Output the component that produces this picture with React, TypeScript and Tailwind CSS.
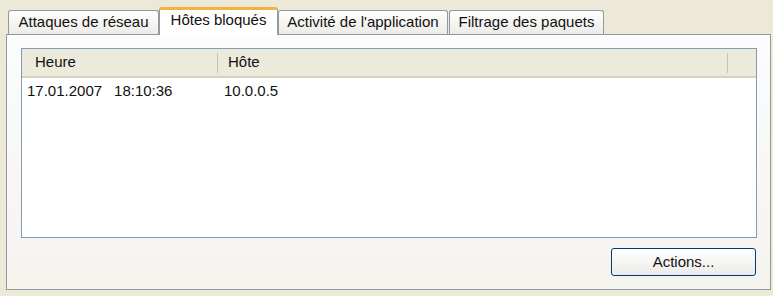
const font = { fontFamily: '"Liberation Sans", Tahoma, sans-serif' }

const tabs = [
  { label: 'Attaques de réseau', w: 'w-[151px]' },
  { label: 'Hôtes bloqués', w: 'w-[119px]', active: true },
  { label: "Activité de l'application", w: 'w-[170px]' },
  { label: 'Filtrage des paquets', w: 'w-[155px]' },
]

export default function App() {
  return (
    <div className="w-[773px] h-[296px] bg-[#ece9d8] text-[15px] text-[#111] overflow-hidden" style={font}>
      <div className="flex items-end h-[34px] pt-[6px] pl-[8px] gap-[1px]">
        {tabs.map((t) =>
          t.active ? (
            <div
              key={t.label}
              className={`${t.w} h-[28px] -mb-px -mx-px relative z-10 bg-white border-x border-[#919b9c] border-t-[3px] border-t-[#f4b43c] rounded-t-[3px] flex items-center justify-center pb-[4px]`}
            >
              {t.label}
            </div>
          ) : (
            <div
              key={t.label}
              className={`${t.w} h-[24px] bg-gradient-to-b from-white to-[#ecebe6] border border-b-0 border-[#919b9c] rounded-t-[3px] flex items-center justify-center`}
            >
              {t.label}
            </div>
          )
        )}
      </div>
      <div className="ml-[6px] w-[765px] h-[256px] border border-[#919b9c] bg-gradient-to-b from-[#fcfcfe] to-[#f4f3ee] pt-[13px] pl-[14px]">
        <div className="w-[736px] h-[190px] border border-[#7f9db9] bg-white">
          <div className="flex h-[29px] bg-[#ebeadb] border-b-2 border-[#d6d2c2] items-center">
            <div className="w-[195px] pl-[13px] flex items-center h-full">Heure</div>
            <div className="w-px h-[20px] bg-[#c7c5b2]" />
            <div className="w-[509px] pl-[10px]">Hôte</div>
            <div className="w-px h-[20px] bg-[#c7c5b2]" />
          </div>
          <div className="flex h-[22px] items-center mt-[2px]">
            <div className="w-[202px] pl-[5px] flex gap-[12px]">
              <span>17.01.2007</span>
              <span>18:10:36</span>
            </div>
            <div>10.0.0.5</div>
          </div>
        </div>
        <div className="flex justify-end w-[736px] mt-[10px] pr-[1px]">
          <button className="w-[145px] h-[28px] border border-[#003c74] rounded-[3px] bg-gradient-to-b from-white to-[#ecebe6] flex items-center justify-center" style={font}>
            Actions...
          </button>
        </div>
      </div>
    </div>
  )
}
